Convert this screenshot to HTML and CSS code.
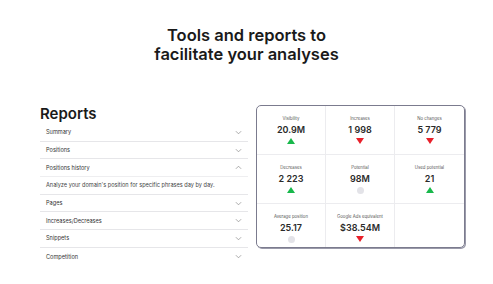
FILE: index.html
```html
<!DOCTYPE html>
<html>
<head>
<meta charset="utf-8">
<link rel="stylesheet" href="styles.css">
</head>
<body>
<h1 class="title">Tools and reports to<br>facilitate your analyses</h1>
<div class="main">
  <div class="reports">
    <h2 class="reports-title">Reports</h2>
    <div class="acc">
      <div class="row"><span>Summary</span><svg class="chev" viewBox="0 0 8 5"><path d="M1 1l3 3 3-3"/></svg></div>
      <div class="row"><span>Positions</span><svg class="chev" viewBox="0 0 8 5"><path d="M1 1l3 3 3-3"/></svg></div>
      <div class="row open"><span>Positions history</span><svg class="chev" viewBox="0 0 8 5"><path d="M1 4l3-3 3 3"/></svg></div>
      <div class="desc">Analyze your domain's position for specific phrases day by day.</div>
      <div class="row"><span>Pages</span><svg class="chev" viewBox="0 0 8 5"><path d="M1 1l3 3 3-3"/></svg></div>
      <div class="row"><span>Increases/Decreases</span><svg class="chev" viewBox="0 0 8 5"><path d="M1 1l3 3 3-3"/></svg></div>
      <div class="row"><span>Snippets</span><svg class="chev" viewBox="0 0 8 5"><path d="M1 1l3 3 3-3"/></svg></div>
      <div class="row last"><span>Competition</span><svg class="chev" viewBox="0 0 8 5"><path d="M1 1l3 3 3-3"/></svg></div>
    </div>
  </div>
  <div class="card">
    <div class="cell"><div class="lbl">Visibility</div><div class="val">20.9M</div><span class="up"></span></div>
    <div class="cell"><div class="lbl">Increases</div><div class="val">1 998</div><span class="down"></span></div>
    <div class="cell"><div class="lbl">No changes</div><div class="val">5 779</div><span class="down"></span></div>
    <div class="cell"><div class="lbl">Decreases</div><div class="val">2 223</div><span class="up"></span></div>
    <div class="cell"><div class="lbl">Potential</div><div class="val">98M</div><span class="dot"></span></div>
    <div class="cell"><div class="lbl">Used potential</div><div class="val">21</div><span class="up"></span></div>
    <div class="cell brow"><div class="lbl">Average position</div><div class="val">25.17</div><span class="dot"></span></div>
    <div class="cell brow"><div class="lbl">Google Ads equivalent</div><div class="val">$38.54M</div><span class="down"></span></div>
    <div class="cell brow"></div>
  </div>
</div>
</body>
</html>
```
FILE: styles.css
```css
* { box-sizing: border-box; }
html, body { margin: 0; padding: 0; background: #fff; }
body {
  font-family: "Inter", "Open Sans", sans-serif;
  color: #222;
  width: 493px;
  height: 284px;
  overflow: hidden;
}
.title {
  margin: 0;
  padding-top: 26px;
  text-align: center;
  font-size: 16.5px;
  line-height: 19px;
  font-weight: 600;
  color: #1a1a1a;
}
.main {
  display: flex;
  padding: 0 28px 0 40px;
  margin-top: 41px;
  gap: 8px;
  align-items: flex-start;
}
.reports { width: 208px; }
.reports-title {
  margin: 0;
  font-size: 15px;
  line-height: 17px;
  font-weight: 600;
  color: #1a1a1a;
}
.acc { margin-top: 2px; }
.row {
  display: flex;
  justify-content: space-between;
  align-items: center;
  height: 17.7px;
  padding: 0 6px 0 6px;
  border-bottom: 1px solid #e6e6e9;
  font-size: 5.6px;
  color: #333;
}
.row.last { border-bottom: none; }
.row.open { border-bottom: 1px solid #eeeef0; }
.desc {
  height: 17.7px;
  display: flex;
  align-items: center;
  padding: 0 6px;
  font-size: 5.6px;
  color: #444;
  border-bottom: 1px solid #e6e6e9;
}
.chev {
  width: 7px;
  height: 5px;
  fill: none;
  stroke: #888;
  stroke-width: 0.8;
}
.card {
  margin-top: 0;
  width: 209px;
  height: 143px;
  border: 1.3px solid #7b7b8e;
  border-radius: 5px;
  box-shadow: 1px 1px 0 #9a9aaa;
  display: grid;
  grid-template-columns: 1fr 1fr 1fr;
  grid-template-rows: 49px 49px 1fr;
  overflow: hidden;
}
.cell {
  display: flex;
  flex-direction: column;
  align-items: center;
  padding-top: 10px;
  border-right: 1px solid #ececef;
  border-bottom: 1px solid #ececef;
}
.cell:nth-child(3n) { border-right: none; }
.cell.brow { border-bottom: none; }
.lbl {
  font-size: 4.3px;
  color: #555;
  line-height: 5px;
}
.val {
  margin-top: 3px;
  font-size: 9px;
  line-height: 11px;
  font-weight: 600;
  color: #2a2a2a;
}
.up, .down, .dot { margin-top: 3px; display: block; }
.up {
  width: 0; height: 0;
  border-left: 4.5px solid transparent;
  border-right: 4.5px solid transparent;
  border-bottom: 6px solid #18b84b;
}
.down {
  width: 0; height: 0;
  border-left: 4.5px solid transparent;
  border-right: 4.5px solid transparent;
  border-top: 6px solid #e8202a;
}
.dot {
  width: 7px; height: 7px;
  border-radius: 50%;
  background: #e3e3e8;
}
```
